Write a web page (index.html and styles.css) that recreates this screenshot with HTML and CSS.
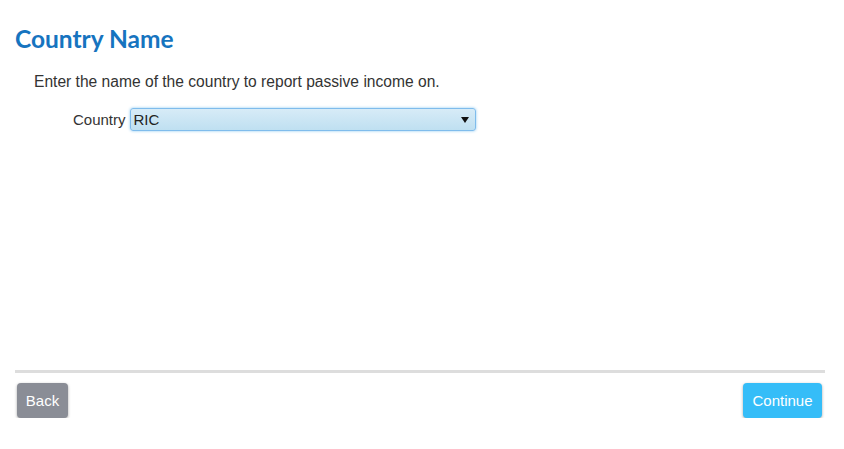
FILE: index.html
```html
<!DOCTYPE html>
<html lang="en">
<head>
    <meta charset="UTF-8">
    <meta name="viewport" content="width=device-width, initial-scale=1.0">
    <title>Country Name</title>
    <link rel="stylesheet" href="styles.css">
</head>
<body>
    <div class="page">
        <div class="content">
            <h1 class="title">Country Name</h1>
            <p class="intro">Enter the name of the country to report passive income on.</p>
            <div class="field">
                <label for="country">Country</label>
                <div class="picker">
                    <select id="country">
                        <option>RIC</option>
                    </select>
                </div>
            </div>
        </div>
        <div class="actions">
            <button class="btn back">Back</button>
            <button class="btn next">Continue</button>
        </div>
    </div>
</body>
</html>
```

FILE: styles.css
```css
body {
    margin: 0;
    font-family: "Liberation Sans", Arial, sans-serif;
    color: #333;
    background: #fff;
}
.page {
    padding: 0 19px 0 15px;
}
.content {
    height: 370px;
    box-sizing: border-box;
    padding-top: 24px;
}
.title {
    margin: 0;
    font-family: "Lato", "Open Sans", sans-serif;
    font-weight: bold;
    font-size: 24.5px;
    color: #1674bf;
}
.intro {
    margin: 20px 0 0 19px;
    font-size: 15.6px;
}
.field {
    display: flex;
    align-items: center;
    margin: 17px 0 0 58px;
    font-size: 15px;
}
.field label {
    margin-right: 4px;
}
.picker {
    position: relative;
    width: 346px;
}
.picker select {
    appearance: none;
    width: 100%;
    height: 23px;
    padding: 0 0 0 3px;
    font-family: inherit;
    font-size: 15px;
    color: #222;
    border: 1px solid #7fbcec;
    border-radius: 3px;
    background: linear-gradient(#d7ebf7, #bfe0f1);
    box-shadow: 0 0 3px #8cc8f0;
}
.picker::after {
    content: "";
    position: absolute;
    right: 7px;
    top: 9px;
    border-left: 4px solid transparent;
    border-right: 4px solid transparent;
    border-top: 6px solid #111;
    pointer-events: none;
}
.actions {
    border-top: 3px solid #dddddd;
    display: flex;
    justify-content: space-between;
    padding: 10px 3px 0 2px;
}
.btn {
    border: none;
    border-radius: 4px;
    color: #fff;
    font-family: inherit;
    font-size: 15px;
    height: 35px;
    box-shadow: 0 1px 3px rgba(0,0,0,0.35);
}
.back {
    background: #8a8d96;
    width: 51px;
}
.next {
    background: #35bdf8;
    width: 79px;
}
```
